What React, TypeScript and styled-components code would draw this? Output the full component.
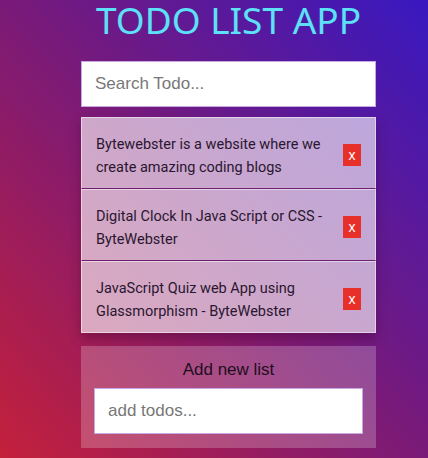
import styled, { createGlobalStyle } from 'styled-components';

const GlobalStyle = createGlobalStyle`
	html,
	body {
		margin: 0;
		padding: 0;
		height: 100%;
	}

	body {
		background: linear-gradient(to top right, #c4203a 0%, #7a1a78 50%, #3818c0 100%);
		font-family: 'Liberation Sans', Arial, sans-serif;
		overflow: hidden;
	}
`;

const Page = styled.main`
	width: 295px;
	height: 458px;
	margin-left: 81px;
	display: flex;
	flex-direction: column;
`;

const Title = styled.h1`
	margin: 0;
	height: 61px;
	padding-top: 2px;
	box-sizing: border-box;
	text-align: center;
	font-family: 'Noto Sans', 'Open Sans', sans-serif;
	font-weight: 400;
	font-size: 37px;
	line-height: 36px;
	color: #5ce1f6;
	white-space: nowrap;
`;

const TextInput = styled.input`
	box-sizing: border-box;
	width: 100%;
	height: 46px;
	border: 1px solid #c8a8e0;
	padding: 0 13px;
	font-family: 'Liberation Sans', Arial, sans-serif;
	font-size: 17px;
	color: #333;
	background: #fff;
	outline: none;

	&::placeholder {
		color: #777;
	}
`;

const List = styled.ul`
	list-style: none;
	margin: 10px 0 0;
	padding: 0;
	box-shadow: 0 6px 10px rgba(60, 0, 40, 0.35);
`;

const Item = styled.li`
	box-sizing: border-box;
	height: 72px;
	display: flex;
	align-items: center;
	gap: 20px;
	padding: 6px 14px 0;
	background: rgba(255, 255, 255, 0.62);
	border: 1px solid rgba(255, 255, 255, 0.5);
	border-bottom: 1px solid #6e1e70;

	&:last-child {
		border-bottom: 1px solid rgba(255, 255, 255, 0.5);
	}
`;

const ItemText = styled.span`
	flex: 1;
	font-family: 'Roboto', sans-serif;
	font-size: 14.5px;
	line-height: 23px;
	color: #2a1630;
`;

const DeleteButton = styled.button`
	width: 18px;
	height: 22px;
	padding: 0;
	margin-top: -2px;
	border: none;
	background: #e8302a;
	color: #fff;
	font-family: 'Liberation Sans', Arial, sans-serif;
	font-size: 14px;
	line-height: 20px;
	cursor: pointer;
`;

const AddBox = styled.section`
	box-sizing: border-box;
	margin-top: 13px;
	height: 102px;
	padding: 14px 13px 0;
	background: rgba(255, 255, 255, 0.22);
	display: flex;
	flex-direction: column;
	align-items: center;
	gap: 8px;
`;

const AddLabel = styled.label`
	font-family: 'Liberation Sans', Arial, sans-serif;
	font-size: 17px;
	color: #1e0e20;
	line-height: 20px;
`;

const todos = [
	'Bytewebster is a website where we create amazing coding blogs',
	'Digital Clock In Java Script or CSS - ByteWebster',
	'JavaScript Quiz web App using Glassmorphism - ByteWebster',
];

const App = () => {
	return (
		<>
			<GlobalStyle />
			<Page>
				<Title>TODO LIST APP</Title>
				<TextInput placeholder="Search Todo..." />
				<List>
					{todos.map((todo) => (
						<Item key={todo}>
							<ItemText>{todo}</ItemText>
							<DeleteButton>x</DeleteButton>
						</Item>
					))}
				</List>
				<AddBox>
					<AddLabel>Add new list</AddLabel>
					<TextInput placeholder="add todos..." />
				</AddBox>
			</Page>
		</>
	);
};

export default App;
